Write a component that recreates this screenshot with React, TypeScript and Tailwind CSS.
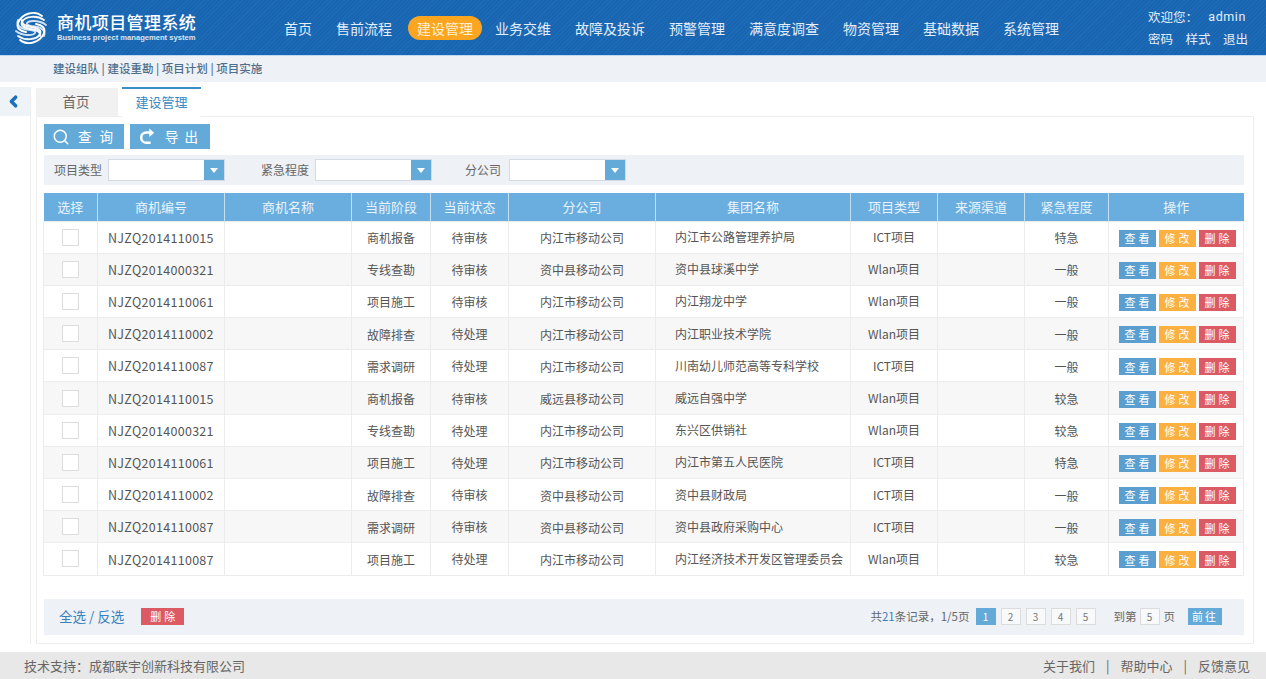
import { Search, ChevronLeft } from "lucide-react";

const FONT = "font-['Noto_Sans_CJK_SC','Liberation_Sans',sans-serif]";

const navItems = ["首页", "售前流程", "建设管理", "业务交维", "故障及投诉", "预警管理", "满意度调查", "物资管理", "基础数据", "系统管理"];

const columns = [
  { title: "选择", width: 54 },
  { title: "商机编号", width: 127 },
  { title: "商机名称", width: 127 },
  { title: "当前阶段", width: 79 },
  { title: "当前状态", width: 78 },
  { title: "分公司", width: 147 },
  { title: "集团名称", width: 195 },
  { title: "项目类型", width: 87 },
  { title: "来源渠道", width: 87 },
  { title: "紧急程度", width: 84 },
  { title: "操作", width: 135 },
];

const rows = [
  ["NJZQ2014110015", "商机报备", "待审核", "内江市移动公司", "内江市公路管理养护局", "ICT项目", "特急"],
  ["NJZQ2014000321", "专线查勘", "待审核", "资中县移动公司", "资中县球溪中学", "Wlan项目", "一般"],
  ["NJZQ2014110061", "项目施工", "待审核", "内江市移动公司", "内江翔龙中学", "Wlan项目", "一般"],
  ["NJZQ2014110002", "故障排查", "待处理", "内江市移动公司", "内江职业技术学院", "Wlan项目", "一般"],
  ["NJZQ2014110087", "需求调研", "待处理", "内江市移动公司", "川南幼儿师范高等专科学校", "ICT项目", "一般"],
  ["NJZQ2014110015", "商机报备", "待审核", "威远县移动公司", "威远自强中学", "Wlan项目", "较急"],
  ["NJZQ2014000321", "专线查勘", "待处理", "内江市移动公司", "东兴区供销社", "Wlan项目", "较急"],
  ["NJZQ2014110061", "项目施工", "待处理", "内江市移动公司", "内江市第五人民医院", "ICT项目", "特急"],
  ["NJZQ2014110002", "故障排查", "待审核", "资中县移动公司", "资中县财政局", "ICT项目", "一般"],
  ["NJZQ2014110087", "需求调研", "待审核", "资中县移动公司", "资中县政府采购中心", "ICT项目", "一般"],
  ["NJZQ2014110087", "项目施工", "待处理", "内江市移动公司", "内江经济技术开发区管理委员会", "Wlan项目", "较急"],
];

function Logo() {
  return (
    <svg width="36" height="34" viewBox="0 0 36 34" fill="none" stroke="#fff" strokeLinecap="round" strokeWidth="1.900" className="-ml-[1px] mr-[1px]">
      <path d="M29 5C22 -1 9 2 5 12C3 17 7 20 13 21" />
      <path d="M31 9C24 4 12 5 9 11C7 15 12 17 18 18C24 19 28 21 27 25" opacity="0.95" />
      <path d="M33 14C27 9 16 9 14 12C13 14 17 15 22 15.500C29 16.500 33 20 31 25" opacity="0.8" />
      <path d="M7 29C14 35 27 32 31 22C33 17 29 14 23 13" />
      <path d="M5 25C12 30 24 29 27 23C29 19 24 17 18 16C12 15 8 13 9 9" opacity="0.95" />
      <path d="M3 20C9 25 20 25 22 22C23 20 19 19 14 18.500C7 17.500 3 14 5 9" opacity="0.8" />
    </svg>
  );
}

function ExportIcon() {
  return (
    <svg width="18" height="18" viewBox="0 0 20 20" fill="none" stroke="#fff">
      <path d="M13 5H9.500C6 5 3.500 7.300 3.500 10.500C3.500 13.700 6 16.500 9.500 16.500H14" strokeWidth="2.800" />
      <path d="M12.500 0.500L18 5.200L12.500 10Z" fill="#fff" stroke="none" />
    </svg>
  );
}

function ActionButton({ label, color }: { label: string; color: string }) {
  return (
    <span className={`flex h-[17px] w-[37px] items-center justify-center pl-[3px] text-[11px] tracking-[3px] text-white ${color}`}>
      {label}
    </span>
  );
}

function FilterSelect({ label, className, labelClass }: { label: string; className: string; labelClass: string }) {
  return (
    <div className={`flex items-center ${className}`}>
      <span className={`text-[12px] text-[#666] ${labelClass}`}>{label}</span>
      <div className="flex h-[22px] w-[117px] border border-[#d4dbe4] bg-white">
        <div className="flex-1" />
        <div className="flex w-[20px] items-center justify-center bg-[#64aad9]">
          <span className="h-0 w-0 border-x-[4px] border-t-[5px] border-x-transparent border-t-white" />
        </div>
      </div>
    </div>
  );
}

function PageBox({ value }: { value: string }) {
  return (
    <span className="flex h-[17px] w-[20px] items-center justify-center border border-[#dcdcdc] bg-[#f8f9fb] text-[10px] text-[#777]">
      {value}
    </span>
  );
}

export default function App() {
  return (
    <div className={`flex h-[679px] w-[1266px] flex-col overflow-hidden bg-white ${FONT}`}>
      <header className="flex h-[56px] items-center border-b border-[#bcd9f2] bg-[#1b68b5] bg-[repeating-linear-gradient(135deg,#1d6cba_0px,#1d6cba_1px,#1a65b0_1px,#1a65b0_3px)] pl-[14px] text-white">
        <Logo />
        <div className="ml-[7px] w-[140px]">
          <div className="text-[17px] font-medium leading-[20px] tracking-[0.4px]">商机项目管理系统</div>
          <div className="mt-[1px] font-['Liberation_Sans',sans-serif] text-[7.6px] font-bold leading-[10px] text-[#d8e6f4]">
            Business project management system
          </div>
        </div>
        <nav className="ml-[75px] flex items-center">
          {navItems.map((item, i) =>
            i === 2 ? (
              <span key={item} className="ml-[4px] mr-[1px] rounded-full bg-[#fca521] px-[9px] py-[2px] text-[14px] leading-[20px] text-[#fff1d6]">
                {item}
              </span>
            ) : (
              <span key={item} className="px-[12px] text-[14px] leading-[20px] text-[#e3eefa]">
                {item}
              </span>
            )
          )}
        </nav>
        <div className="ml-auto mr-[18px] w-[100px] text-[12.500px] leading-[22px] text-[#e3eefa]">
          <div className="flex justify-between pr-[2px]">
            <span>欢迎您：</span>
            <span className="font-['Roboto',sans-serif] tracking-[0.6px]">admin</span>
          </div>
          <div className="flex justify-between">
            <span>密码</span>
            <span>样式</span>
            <span>退出</span>
          </div>
        </div>
      </header>

      <div className="flex h-[26px] items-center bg-[#eef1f6] pl-[53px] text-[11.500px] font-medium text-[#4d6f8d]">
        建设组队 | 建设重勘 | 项目计划 | 项目实施
      </div>

      <div className="flex flex-1">
        <aside className="mt-[5px] w-[31px] border-r border-[#eeeeee]">
          <div className="flex h-[29px] items-center justify-center bg-[#eef3f8] pr-[3px] text-[#1c70b8]">
            <ChevronLeft size={17} strokeWidth={5} />
          </div>
        </aside>

        <main className="ml-[5px] mt-[5px] w-[1218px]">
          <div className="flex h-[29px] items-end">
            <div className="flex h-[28px] w-[82px] items-center justify-center bg-[#f1f1f1] pb-[2px] pr-[2px] text-[13.500px] text-[#666]">首页</div>
            <div className="ml-[4px] flex h-[30px] w-[79px] translate-y-[1px] items-center justify-center border-t-2 border-[#3b8dc5] bg-white pb-[3px] text-[13px] text-[#3a8ac2]">
              建设管理
            </div>
          </div>

          <section className="h-[528px] border border-[#eeeeee] pl-[7px] pr-[9px] pt-[7px]">
            <div className="flex gap-[6px]">
              <button className="flex h-[25px] w-[80px] items-center gap-[8px] bg-[#64aad9] pl-[8px] text-[13.500px] tracking-[8px] text-white">
                <Search size={18} strokeWidth={2} />
                <span>查询</span>
              </button>
              <button className="flex h-[25px] w-[80px] items-center gap-[9px] bg-[#64aad9] pl-[8px] text-[13.500px] tracking-[6px] text-white">
                <ExportIcon />
                <span>导出</span>
              </button>
            </div>

            <div className="mt-[6px] flex h-[30px] items-center bg-[#eef1f6] pl-[10px]">
              <FilterSelect label="项目类型" className="" labelClass="mr-[6px]" />
              <FilterSelect label="紧急程度" className="ml-[36px]" labelClass="mr-[6px]" />
              <FilterSelect label="分公司" className="ml-[33px]" labelClass="mr-[8px]" />
            </div>

            <table className="-ml-[1px] mt-[8px] w-[1200px] table-fixed border-collapse text-[12px] text-[#555]">
              <colgroup>
                {columns.map((col) => (
                  <col key={col.title} style={{ width: col.width }} />
                ))}
              </colgroup>
              <thead>
                <tr className="h-[28px] bg-[#69aedf] text-[#e8f3fb]">
                  {columns.map((col) => (
                    <th key={col.title} className="border-x border-[#c5e0f3] p-0 text-[13px] font-normal first:border-l-0 last:border-r-0">
                      {col.title}
                    </th>
                  ))}
                </tr>
              </thead>
              <tbody>
                {rows.map((row, i) => (
                  <tr key={i} className={`h-[32.200px] ${i % 2 === 1 ? "bg-[#f7f7f7]" : "bg-white"}`}>
                    <td className="border border-[#ececec] p-0">
                      <span className="mx-auto block h-[17px] w-[17px] border border-[#dddddd] bg-white" />
                    </td>
                    <td className="border border-[#ececec] p-0 pl-[10px] pt-[2px] text-[12.500px] tracking-[0.3px]">{row[0]}</td>
                    <td className="border border-[#ececec] p-0" />
                    <td className="border border-[#ececec] p-0 pt-[2px] text-center">{row[1]}</td>
                    <td className="border border-[#ececec] p-0 pt-[1px] text-center">{row[2]}</td>
                    <td className="border border-[#ececec] p-0 pt-[2px] text-center">{row[3]}</td>
                    <td className="border border-[#ececec] p-0 pl-[19px]">{row[4]}</td>
                    <td className="border border-[#ececec] p-0 text-center">{row[5]}</td>
                    <td className="border border-[#ececec] p-0" />
                    <td className="border border-[#ececec] p-0 pt-[2px] text-center">{row[6]}</td>
                    <td className="border border-[#ececec] p-0 pl-[2px] pt-[2px]">
                      <div className="flex justify-center gap-[3px]">
                        <ActionButton label="查看" color="bg-[#5a9fd0]" />
                        <ActionButton label="修改" color="bg-[#fcb040]" />
                        <ActionButton label="删除" color="bg-[#dc5a63]" />
                      </div>
                    </td>
                  </tr>
                ))}
              </tbody>
            </table>

            <div className="mt-[23px] flex h-[36px] items-center bg-[#eef2f7] pl-[15px] pr-[22px]">
              <span className="text-[13.500px] text-[#3a80bd]">全选 / 反选</span>
              <span className="ml-[17px] flex h-[17px] w-[43px] items-center justify-center bg-[#dc5a63] pl-[3px] text-[11px] tracking-[3px] text-white">删除</span>
              <div className="ml-auto flex items-center text-[11.500px] text-[#666]">
                <span>
                  共<span className="text-[#3a80bd]">21</span>条记录，1/5页
                </span>
                <span className="ml-[6px] flex h-[17px] w-[20px] items-center justify-center bg-[#64aad9] text-[10px] text-white">1</span>
                <div className="ml-[5px] flex gap-[5px]">
                  <PageBox value="2" />
                  <PageBox value="3" />
                  <PageBox value="4" />
                  <PageBox value="5" />
                </div>
                <span className="ml-[18px]">到第</span>
                <span className="ml-[3px]">
                  <PageBox value="5" />
                </span>
                <span className="ml-[4px]">页</span>
                <span className="ml-[13px] flex h-[17px] w-[34px] items-center justify-center bg-[#64aad9] text-[11px] tracking-[2px] text-white">前往</span>
              </div>
            </div>
          </section>
        </main>
      </div>

      <footer className="mt-[8px] flex h-[27px] items-center justify-between bg-[#e8e8e8] pl-[24px] pr-[16px] text-[13px] text-[#666]">
        <span>技术支持：成都联宇创新科技有限公司</span>
        <div className="flex items-center gap-[11px]">
          <span>关于我们</span>
          <span>|</span>
          <span>帮助中心</span>
          <span>|</span>
          <span>反馈意见</span>
        </div>
      </footer>
    </div>
  );
}
